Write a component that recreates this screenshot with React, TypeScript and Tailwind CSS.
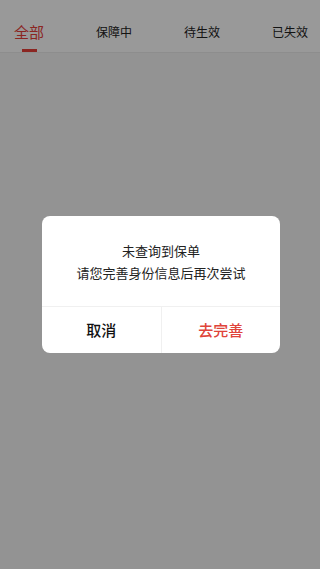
const tabs = ['全部', '保障中', '待生效', '已失效']

export default function App() {
  return (
    <div
      className="relative w-[320px] h-[569px] overflow-hidden bg-[#f5f5f5]"
      style={{ fontFamily: '"Noto Sans CJK SC", "Noto Sans", sans-serif' }}
    >
      {/* tab bar */}
      <div className="h-[53px] bg-white border-b border-[#ececec] flex items-start justify-between pl-[14px] pr-[12px]">
        {tabs.map((t, i) => (
          <div key={t} className="flex flex-col items-center pt-[22px]">
            <span
              className={
                i === 0
                  ? 'text-[15px] leading-[20px] text-[#e8403a]'
                  : 'text-[12px] leading-[20px] text-[#222]'
              }
            >
              {t}
            </span>
            {i === 0 && <span className="mt-[7px] w-[15px] h-[3px] bg-[#e8403a]" />}
          </div>
        ))}
      </div>

      {/* overlay */}
      <div className="absolute inset-0 bg-black/40 flex items-start justify-center pl-[2px]">
        <div className="mt-[216px] w-[238px] bg-white rounded-[8px] overflow-hidden">
          <div className="h-[90px] flex flex-col items-center justify-center pt-[2px] text-[13px] leading-[22px] text-[#222]">
            <p>未查询到保单</p>
            <p>请您完善身份信息后再次尝试</p>
          </div>
          <div className="h-[47px] border-t border-[#f0f0f0] flex">
            <button className="flex-1 text-[15px] font-medium text-[#111] border-r border-[#f0f0f0]">取消</button>
            <button className="flex-1 text-[15px] font-medium text-[#e0443a]">去完善</button>
          </div>
        </div>
      </div>
    </div>
  )
}
